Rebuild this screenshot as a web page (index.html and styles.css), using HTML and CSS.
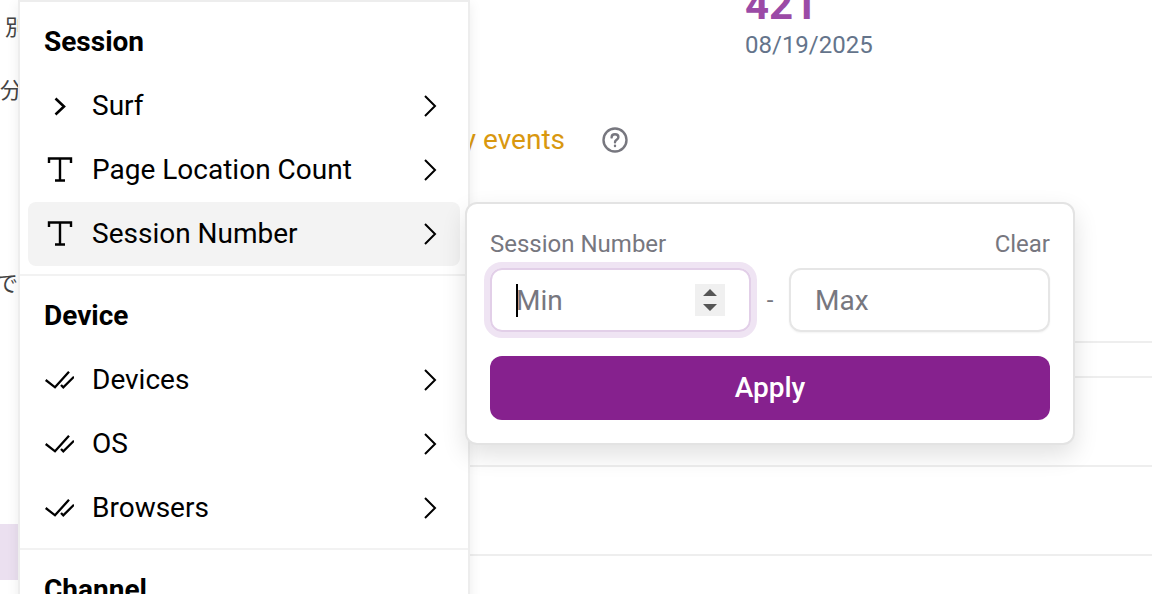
FILE: index.html
```html
<!DOCTYPE html>
<html lang="ja">
<head>
   <meta charset="UTF-8">
   <meta name="viewport" content="width=device-width, initial-scale=1.0">
   <title>Session filters</title>
   <link rel="stylesheet" href="styles.css">
</head>
<body>
   <!-- page behind the menu -->
   <div class="page">
       <div class="side">
           <p class="note note-first">別</p>
           <p class="note note-second">分</p>
           <p class="note note-third">で</p>
           <div class="side-active"></div>
       </div>
       <div class="main">
           <div class="stat">
               <div class="stat-value">421</div>
               <div class="stat-date">08/19/2025</div>
           </div>
           <div class="events">
               <span class="events-title">Activity events</span>
               <svg class="help-icon" viewBox="0 0 26 26" fill="none" stroke="#77777f" stroke-width="2.4" stroke-linecap="round">
                   <circle cx="13" cy="13" r="11.5"/>
                   <path d="M9.6 10.4c0-2 1.5-3.2 3.4-3.2s3.4 1.2 3.4 3c0 2.600-3.400 2.600-3.400 5"/>
                   <path d="M13 18.800v.2"/>
               </svg>
           </div>
           <div class="row row-head"></div>
           <div class="row row-short"></div>
           <div class="row"></div>
           <div class="row"></div>
       </div>
   </div>

   <!-- filter menu -->
   <div class="menu">
       <div class="menu-section">
           <h3>Session</h3>
           <div class="menu-item">
               <svg class="item-icon" viewBox="0 0 30 30" fill="none" stroke="#000" stroke-width="2.600"><path d="M11.500 7.500l8.500 8-8.500 8"/></svg>
               <span>Surf</span>
               <svg class="chevron" viewBox="0 0 14 24" fill="none" stroke="#000" stroke-width="2"><path d="M2 2l10 10L2 22"/></svg>
           </div>
           <div class="menu-item">
               <svg class="item-icon" viewBox="0 0 30 30" fill="none" stroke="#000" stroke-width="2.400"><path d="M5 8V3.500h22V8M16 3.500V25M11 25.500h10"/></svg>
               <span>Page Location Count</span>
               <svg class="chevron" viewBox="0 0 14 24" fill="none" stroke="#000" stroke-width="2"><path d="M2 2l10 10L2 22"/></svg>
           </div>
           <div class="menu-item menu-item-active">
               <svg class="item-icon" viewBox="0 0 30 30" fill="none" stroke="#000" stroke-width="2.400"><path d="M5 8V3.500h22V8M16 3.500V25M11 25.500h10"/></svg>
               <span>Session Number</span>
               <svg class="chevron" viewBox="0 0 14 24" fill="none" stroke="#000" stroke-width="2"><path d="M2 2l10 10L2 22"/></svg>
           </div>
       </div>
       <div class="menu-section">
           <h3>Device</h3>
           <div class="menu-item">
               <svg class="item-icon" viewBox="0 0 30 30" fill="none" stroke="#000" stroke-width="2.300"><path d="M1.700 15l9.300 7.300L25 6.700M17 20l2.300 2.300L30 11.700"/></svg>
               <span>Devices</span>
               <svg class="chevron" viewBox="0 0 14 24" fill="none" stroke="#000" stroke-width="2"><path d="M2 2l10 10L2 22"/></svg>
           </div>
           <div class="menu-item">
               <svg class="item-icon" viewBox="0 0 30 30" fill="none" stroke="#000" stroke-width="2.300"><path d="M1.700 15l9.300 7.300L25 6.700M17 20l2.300 2.300L30 11.700"/></svg>
               <span>OS</span>
               <svg class="chevron" viewBox="0 0 14 24" fill="none" stroke="#000" stroke-width="2"><path d="M2 2l10 10L2 22"/></svg>
           </div>
           <div class="menu-item">
               <svg class="item-icon" viewBox="0 0 30 30" fill="none" stroke="#000" stroke-width="2.300"><path d="M1.700 15l9.300 7.300L25 6.700M17 20l2.300 2.300L30 11.700"/></svg>
               <span>Browsers</span>
               <svg class="chevron" viewBox="0 0 14 24" fill="none" stroke="#000" stroke-width="2"><path d="M2 2l10 10L2 22"/></svg>
           </div>
       </div>
       <div class="menu-section">
           <h3>Channel</h3>
       </div>
   </div>

   <!-- session number popover -->
   <div class="popover">
       <div class="popover-head">
           <span>Session Number</span>
           <span>Clear</span>
       </div>
       <div class="range">
           <div class="field field-focus">
               <span class="caret"></span>
               <input type="text" placeholder="Min">
               <div class="spinner">
                   <svg viewBox="0 0 14 24" fill="#555"><path d="M7 1l7 7H0zM7 23l7-7H0z"/></svg>
               </div>
           </div>
           <span class="range-dash">-</span>
           <div class="field">
               <input type="text" placeholder="Max">
           </div>
       </div>
       <button type="button" class="apply">Apply</button>
   </div>
</body>
</html>
```

FILE: styles.css
```css
* {
    box-sizing: border-box;
}
html, body {
    height: 100%;
}
body {
    margin: 0;
    overflow: hidden;
    background-color: #fff;
    font-family: Roboto, "Noto Sans CJK JP", sans-serif;
    font-size: 28px;
    color: #000;
}
.page {
    display: flex;
    height: 594px;
    overflow: hidden;
}
.side {
    flex: 0 0 440px;
    display: flex;
    flex-direction: column;
    color: #444;
    font-size: 22px;
    line-height: 26px;
}
.note {
    margin: 0;
}
.note-first {
    margin-top: 15px;
    padding-left: 5px;
}
.note-second {
    margin-top: 37px;
}
.note-third {
    margin-top: 167px;
    margin-left: -4px;
}
.side-active {
    height: 56px;
    margin-top: 227px;
    background-color: #ebe0f0;
}
.main {
    flex: 1;
    min-width: 0;
}
.stat {
    margin-top: -18px;
    padding-left: 305px;
}
.stat-value {
    font-size: 42px;
    line-height: 46px;
    font-weight: 700;
    color: #9b4aa6;
}
.stat-date {
    margin-top: 2px;
    font-size: 24px;
    line-height: 30px;
    color: #64748b;
}
.events {
    display: flex;
    align-items: center;
    height: 40px;
    margin-top: 60px;
    color: #d9980f;
}
.events-title {
    width: 125px;
    padding-bottom: 2px;
    white-space: nowrap;
    direction: rtl;
    overflow: hidden;
}
.help-icon {
    width: 26px;
    height: 26px;
    margin-left: 37px;
}
.row {
    height: 89px;
    border-bottom: 2px solid #eeeeee;
}
.row-head {
    height: 183px;
}
.row-short {
    height: 35px;
}
.menu {
    position: absolute;
    top: 0;
    left: 18px;
    width: 452px;
    height: 620px;
    background-color: #fff;
    border: 2px solid #ededed;
    border-bottom: 0;
    box-shadow: 0 4px 12px rgba(0, 0, 0, 0.08);
}
.menu-section {
    padding: 8px;
    border-bottom: 2px solid #f2f2f2;
}
.menu-section h3 {
    margin: 0;
    padding-left: 16px;
    font-size: 28px;
    line-height: 64px;
    font-weight: 700;
}
.menu-item {
    display: flex;
    align-items: center;
    height: 64px;
    padding: 0 23px 0 16px;
    border-radius: 8px;
}
.menu-item span {
    flex: 1;
    margin-left: 18px;
    padding-bottom: 2px;
}
.menu-item-active {
    background-color: #f3f3f3;
}
.item-icon {
    width: 30px;
    height: 30px;
}
.chevron {
    width: 14px;
    height: 24px;
}
.popover {
    position: absolute;
    top: 202px;
    left: 465px;
    width: 610px;
    padding: 23px;
    background-color: #fff;
    border: 2px solid #e3e3e3;
    border-radius: 12px;
    box-shadow: 0 10px 24px rgba(0, 0, 0, 0.12);
}
.popover-head {
    display: flex;
    justify-content: space-between;
    height: 33px;
    margin-bottom: 8px;
    font-size: 24px;
    line-height: 34px;
    color: #77777f;
}
.range {
    display: flex;
    align-items: center;
}
.field {
    position: relative;
    display: flex;
    align-items: center;
    width: 261px;
    height: 64px;
    padding: 0 24px 0 24px;
    border: 2px solid #e6e6e6;
    border-radius: 12px;
    box-shadow: 0 1px 2px rgba(0, 0, 0, 0.05);
}
.field-focus {
    border-color: #e2cfe8;
    box-shadow: 0 0 0 6px #efe4f3;
}
.field input {
    flex: 1;
    min-width: 0;
    padding: 0;
    border: none;
    outline: none;
    background: none;
    font-family: inherit;
    font-size: 28px;
    color: #000;
}
.field input::placeholder {
    color: #77777f;
    opacity: 1;
}
.caret {
    position: absolute;
    top: 14px;
    left: 24px;
    width: 2px;
    height: 33px;
    background-color: #000;
}
.spinner {
    display: flex;
    align-items: center;
    justify-content: center;
    width: 30px;
    height: 32px;
    background-color: #f0f0f0;
}
.spinner svg {
    width: 14px;
    height: 24px;
}
.range-dash {
    flex: 1;
    text-align: center;
    font-size: 24px;
    color: #77777f;
}
.apply {
    display: block;
    width: 100%;
    height: 64px;
    margin-top: 24px;
    padding-bottom: 3px;
    border: none;
    border-radius: 12px;
    background-color: #86218e;
    color: #fff;
    font-family: inherit;
    font-size: 28px;
    font-weight: 500;
    cursor: pointer;
}
```
